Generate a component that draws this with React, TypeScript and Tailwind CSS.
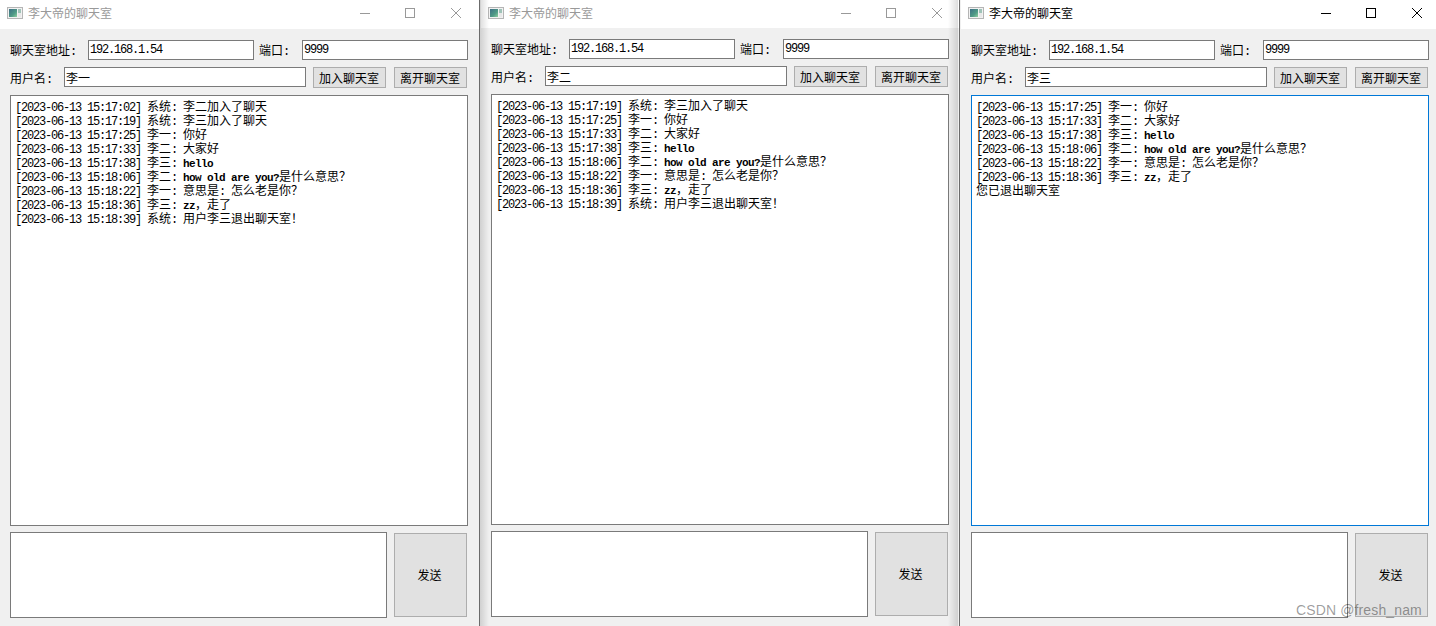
import React from "react";

const CJK = "font-['Noto_Sans_CJK_SC','Noto_Sans_CJK_JP',sans-serif]";

function Ascii({ text }: { text: string }) {
  const m = text.match(/^([^a-z?!]*)(.*)$/s);
  const plain = m ? m[1] : text;
  const heavy = m ? m[2] : "";
  return (
    <>
      {plain && (
        <span className="font-['Liberation_Mono',monospace] tracking-[-1.2px] whitespace-pre">{plain}</span>
      )}
      {heavy && (
        <span className="font-['Liberation_Mono',monospace] font-bold text-[11px] tracking-[-0.6px] whitespace-pre">
          {heavy}
        </span>
      )}
    </>
  );
}

function Mixed({ text }: { text: string }) {
  const runs = text.split(/([\x00-\x7f]+)/).filter(Boolean);
  return (
    <>
      {runs.map((r, i) =>
        /^[\x00-\x7f]+$/.test(r) ? (
          <Ascii key={i} text={r} />
        ) : (
          <span key={i} className="font-['Noto_Sans_CJK_SC','Noto_Sans_CJK_JP',sans-serif] whitespace-pre">
            {r}
          </span>
        )
      )}
    </>
  );
}

function AppIcon() {
  return (
    <svg width="16" height="12" viewBox="0 0 16 12" className="shrink-0">
      <defs>
        <linearGradient id="g" x1="0" y1="0" x2="1" y2="1">
          <stop offset="0" stopColor="#3f6f86" />
          <stop offset="0.6" stopColor="#4f9a86" />
          <stop offset="1" stopColor="#8fcf9f" />
        </linearGradient>
      </defs>
      <rect x="0.5" y="0.5" width="15" height="11" fill="#f2f2f2" stroke="#b5b5b5" />
      <rect x="2" y="2" width="8" height="8" fill="url(#g)" />
      <rect x="11" y="2" width="3" height="4" fill="#9fc3b8" />
      <rect x="11" y="6" width="3" height="4" fill="#e8e8e8" />
    </svg>
  );
}

function Controls({ color }: { color: string }) {
  return (
    <div className="flex items-center ml-auto">
      <svg width="10" height="10" viewBox="0 0 10 10" className="mr-[35px]">
        <path d="M0 5.5H10" stroke={color} fill="none" />
      </svg>
      <svg width="10" height="10" viewBox="0 0 10 10" className="mr-[36px]">
        <rect x="0.5" y="0.5" width="9" height="9" stroke={color} fill="none" />
      </svg>
      <svg width="10" height="10" viewBox="0 0 10 10" className="mr-[18px]">
        <path d="M0 0L10 10M10 0L0 10" stroke={color} strokeWidth="1" fill="none" />
      </svg>
    </div>
  );
}

type WinProps = {
  user: string;
  lines: string[];
  active?: boolean;
  className: string;
  titleClass: string;
  shadowLeft?: boolean;
  shadowRight?: boolean;
};

function Win({ user, lines, active, className, titleClass, shadowLeft, shadowRight }: WinProps) {
  const inputBase = "h-5 border border-[#7a7a7a] bg-white text-[12px] text-black outline-none";
  const btn = `h-[21px] w-[73px] border border-[#adadad] bg-[#e1e1e1] pr-px text-[12px] leading-none text-black ${CJK}`;
  const label = "text-[12px] text-black shrink-0 whitespace-pre";
  return (
    <div className={`relative h-[626px] shrink-0 bg-[#f0f0f0] overflow-hidden ${className}`}>
      <div className={`bg-white ${titleClass}`}>
        <div className="flex h-[26px] w-[479px] items-center pl-[7px]">
          <AppIcon />
          <span className={`ml-[5px] text-[12px] ${active ? "text-black" : "text-[#999999]"} ${CJK}`}>
            李大帝的聊天室
          </span>
          <Controls color={active ? "#000000" : "#999999"} />
        </div>
      </div>
      <div className="pl-[10px] pt-[11px] flex flex-col w-[468px]">
        <div className="flex items-start h-5">
          <span className={`${label} leading-5 w-[78px]`}>
            <Mixed text="聊天室地址: " />
          </span>
          <input
            readOnly
            value="192.168.1.54"
            className={`${inputBase} w-[166px] pl-px font-['Liberation_Mono',monospace] tracking-[-1.2px]`}
          />
          <span className={`${label} leading-5 ml-[5px] w-[43px]`}>
            <Mixed text="端口: " />
          </span>
          <input
            readOnly
            value="9999"
            className={`${inputBase} w-[166px] pl-[1px] font-['Liberation_Mono',monospace] tracking-[-1.2px]`}
          />
        </div>
        <div className="flex items-start h-[21px] mt-[7px]">
          <span className={`${label} leading-[22px] w-[54px]`}>
            <Mixed text="用户名: " />
          </span>
          <input readOnly value={user} className={`${inputBase} w-[242px] pl-px ${CJK}`} />
          <button className={`${btn} ml-[7px]`}>加入聊天室</button>
          <button className={`${btn} ml-[8px]`}>离开聊天室</button>
        </div>
        <div
          className={`mt-[7px] h-[431px] w-[458px] border bg-white pl-[4px] pt-[3px] text-[12px] leading-[14px] text-black ${
            active ? "border-[#0078d7]" : "border-[#7a7a7a]"
          }`}
        >
          {lines.map((l, i) => (
            <div key={i} className="h-[14px] whitespace-pre">
              <Mixed text={l} />
            </div>
          ))}
        </div>
        <div className="mt-[6px] flex items-center h-[86px]">
          <textarea readOnly className="h-[86px] w-[377px] resize-none border border-[#7a7a7a] bg-white outline-none" />
          <button
            className={`ml-[7px] h-[84px] w-[73px] border border-[#adadad] bg-[#e1e1e1] pr-[2px] text-[12px] text-black ${CJK}`}
          >
            发送
          </button>
        </div>
      </div>
      {shadowLeft && (
        <div className="absolute left-0 top-0 h-full w-[9px] bg-gradient-to-r from-[#00000022] to-transparent pointer-events-none" />
      )}
      {shadowRight && (
        <div className="absolute right-px top-0 h-full w-[10px] bg-gradient-to-l from-[#00000022] to-transparent pointer-events-none" />
      )}
    </div>
  );
}

const w1 = [
  "[2023-06-13 15:17:02] 系统: 李二加入了聊天",
  "[2023-06-13 15:17:19] 系统: 李三加入了聊天",
  "[2023-06-13 15:17:25] 李一: 你好",
  "[2023-06-13 15:17:33] 李二: 大家好",
  "[2023-06-13 15:17:38] 李三: hello",
  "[2023-06-13 15:18:06] 李二: how old are you?是什么意思\uFF1F",
  "[2023-06-13 15:18:22] 李一: 意思是: 怎么老是你\uFF1F",
  "[2023-06-13 15:18:36] 李三: zz\uFF0C走了",
  "[2023-06-13 15:18:39] 系统: 用户李三退出聊天室\uFF01",
];

const w2 = w1.slice(1);
const w3 = [...w1.slice(2, 8), "您已退出聊天室"];

export default function App() {
  return (
    <div className="relative flex h-[626px] w-[1436px] overflow-hidden bg-white">
      <Win user="李一" lines={w1} className="w-[480px] border-r border-[#6b6b6b]" titleClass="h-[29px]" />
      <Win
        user="李二"
        lines={w2}
        className="w-[480px] border-r border-[#6b6b6b] pl-px"
        titleClass="h-[28px]"
        shadowLeft
        shadowRight
      />
      <Win user="李三" lines={w3} active className="w-[476px] pl-px" titleClass="h-[29px]" />
      <span className="absolute left-[1296px] top-[602px] text-[14px] leading-4 tracking-[0.13px] text-[#00000066] font-['Liberation_Sans',sans-serif]">
        CSDN @fresh_nam
      </span>
    </div>
  );
}
